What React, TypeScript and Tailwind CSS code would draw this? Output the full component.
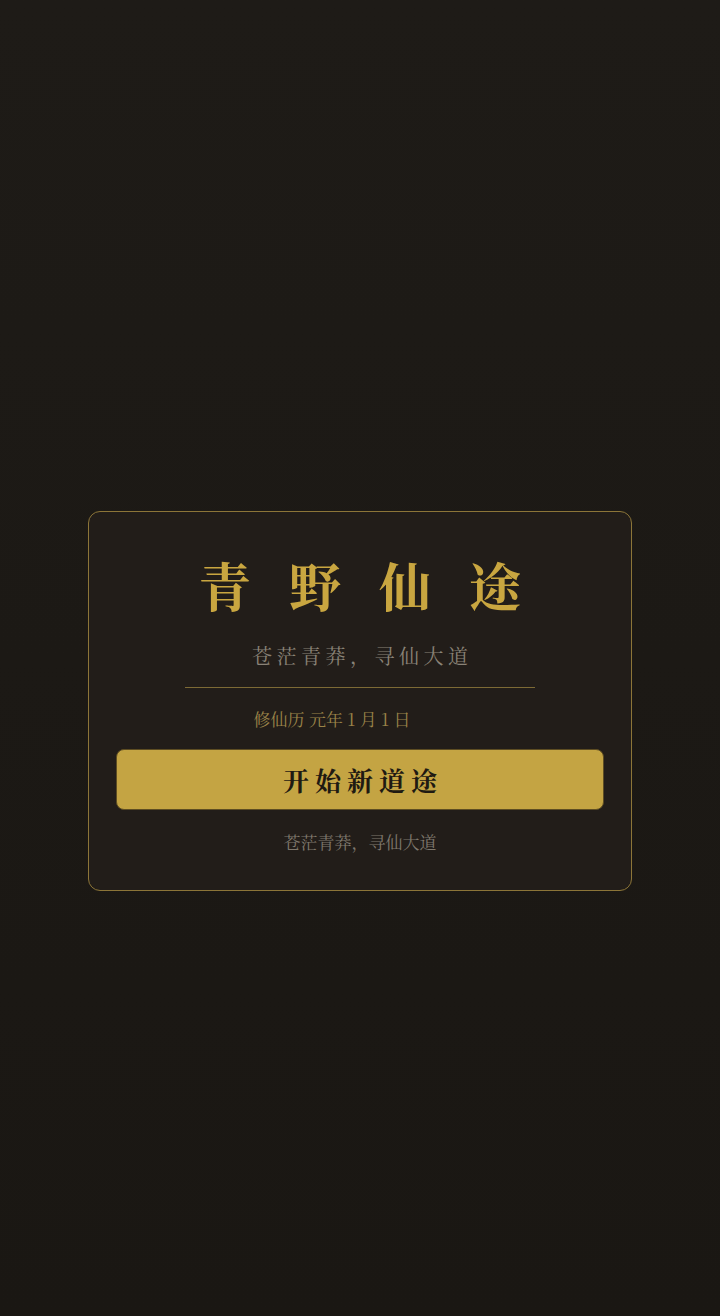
import React from 'react';

const serifStack = {
  fontFamily: '"Noto Serif CJK SC", "Liberation Serif", "Noto Sans CJK SC", serif',
};

export default function App() {
  return (
    <div
      className="min-h-screen w-full bg-gradient-to-b from-[#1e1b17] to-[#1a1713] flex items-center justify-center pt-[86px]"
      style={serifStack}
    >
      <div className="w-[544px] rounded-[12px] border border-[#8c7538] bg-[#221d19] px-[27px] pt-[47px] pb-[40px] flex flex-col items-center">
        <h1 className="text-[52px] leading-none font-bold text-[#c9a640] tracking-[38px] pl-[38px]">
          青野仙途
        </h1>
        <p className="mt-[35px] text-[20px] leading-none text-[#8a8377] tracking-[4.5px] pl-[4.5px]">
          苍茫青莽，寻仙大道
        </p>
        <div className="mt-[21px] h-px w-[350px] bg-[#7d6a35]" />
        <div className="mt-[22px] w-full flex justify-center pr-[56px]">
          <span className="text-[17px] leading-none text-[#9a8348]">修仙历 元年 1 月 1 日</span>
        </div>
        <button className="mt-[22px] w-full h-[61px] rounded-[8px] border border-[#5e4d22] bg-[#c4a443] text-[26px] leading-none font-bold text-[#1f1a12] tracking-[6px] pl-[6px]">
          开始新道途
        </button>
        <p className="mt-[23px] text-[17px] leading-none text-[#7f786d]">苍茫青莽，寻仙大道</p>
      </div>
    </div>
  );
}
